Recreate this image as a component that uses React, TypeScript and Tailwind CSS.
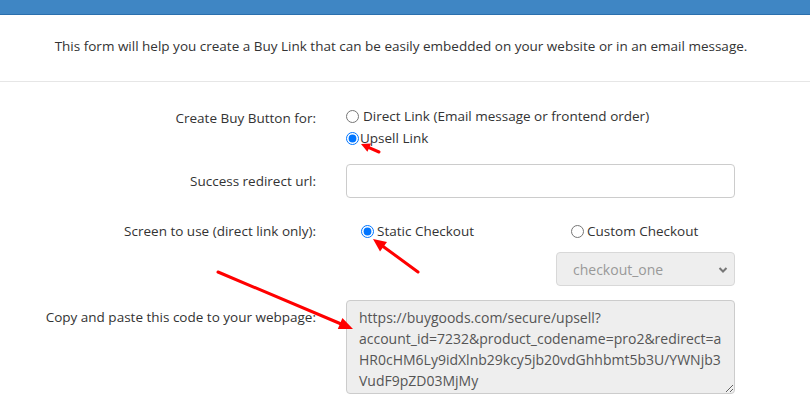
import React from 'react';

const codeLines = [
  'https://buygoods.com/secure/upsell?',
  'account_id=7232&product_codename=pro2&redirect=a',
  'HR0cHM6Ly9idXlnb29kcy5jb20vdGhhbmt5b3U/YWNjb3',
  'VudF9pZD03MjMy',
];

const Arrows: React.FC = () => (
  <svg className="absolute left-0 top-0 pointer-events-none" width="810" height="404" viewBox="0 0 810 404">
    <g stroke="#ff0000" strokeWidth="3" strokeLinecap="round" fill="#ff0000">
      <line x1="379" y1="152" x2="369" y2="147.7" />
      <polygon points="361,144 371,143.6 367.4,151.8" stroke="none" />
      <line x1="418" y1="272" x2="383.5" y2="246.7" />
      <polygon points="373,239 387,241.9 380,251.5" stroke="none" />
      <line x1="218" y1="272" x2="340" y2="323.5" />
      <polygon points="353,329 337.8,329.1 342.4,318" stroke="none" />
    </g>
  </svg>
);

const Row: React.FC<{ label: string; labelClass?: string; align?: string; children: React.ReactNode }> = ({
  label,
  labelClass = '',
  align = 'items-start',
  children,
}) => (
  <div className={`flex ${align}`}>
    <div className={`w-[316px] shrink-0 text-right text-[13.5px] leading-[22px] text-[#333] ${labelClass}`}>{label}</div>
    <div className="ml-[30px] w-[389px] shrink-0">{children}</div>
  </div>
);

export default function App() {
  return (
    <div className="relative w-[810px] h-[404px] overflow-hidden bg-white font-['Open_Sans',sans-serif]">
      <div className="h-[15px] bg-[#3f86c4] border-b border-[#2a6fad]" />
      <div className="h-[67px] flex items-center justify-center pb-[4px] pr-[8px] border-b border-[#e6e6e6] text-[13.5px] text-[#333]">
        This form will help you create a Buy Link that can be easily embedded on your website or in an email message.
      </div>

      <div className="flex flex-col pt-[23px]">
        <Row label="Create Buy Button for:" labelClass="pt-[2px]">
          <label className="flex items-center h-[22px] text-[13.5px] text-[#333]">
            <input type="radio" name="kind" className="m-0 w-[13px] h-[13px] mr-[4px]" />
            Direct Link (Email message or frontend order)
          </label>
          <label className="flex items-center h-[22px] text-[13.5px] text-[#333]">
            <input type="radio" name="kind" defaultChecked className="m-0 w-[13px] h-[13px] mr-[1px]" />
            Upsell Link
          </label>
        </Row>

        <div className="mt-[15px]">
          <Row label="Success redirect url:" align="items-center">
            <input
              type="text"
              className="block w-full h-[34px] rounded-[4px] border border-[#ccc] bg-white px-3 text-[13px] outline-none"
            />
          </Row>
        </div>

        <div className="mt-[22px]">
          <Row label="Screen to use (direct link only):">
            <div className="flex">
              <div className="w-[210px]">
                <label className="flex items-center h-[22px] pl-[15px] text-[13.5px] text-[#333]">
                  <input type="radio" name="screen" defaultChecked className="m-0 w-[13px] h-[13px] mr-[3px]" />
                  Static Checkout
                </label>
              </div>
              <div className="w-[179px]">
                <label className="flex items-center h-[22px] pl-[15px] text-[13.5px] text-[#333]">
                  <input type="radio" name="screen" className="m-0 w-[13px] h-[13px] mr-[3px]" />
                  Custom Checkout
                </label>
                <div className="relative mt-[10px] h-[34px] rounded-[4px] border border-[#d8d8d8] bg-[#eee] flex items-center pl-[16px] text-[14px] text-[#999]">
                  checkout_one
                  <svg className="absolute right-[6px] top-[13px]" width="10" height="8" viewBox="0 0 10 8">
                    <path d="M1.5 2l3.5 3.5L8.5 2" fill="none" stroke="#777" strokeWidth="2" />
                  </svg>
                </div>
              </div>
            </div>
          </Row>
        </div>

        <div className="mt-[14px]">
          <Row label="Copy and paste this code to your webpage:" labelClass="pt-[6px]">
            <textarea
              readOnly
              value={codeLines.join('\n')}
              className="block w-full h-[94px] rounded-[4px] border border-[#ccc] bg-[#eee] pl-[12px] pr-[8px] pt-[6px] text-[14px] leading-[21px] text-[#555] outline-none overflow-hidden"
            />
          </Row>
        </div>
      </div>

      <Arrows />
    </div>
  );
}
